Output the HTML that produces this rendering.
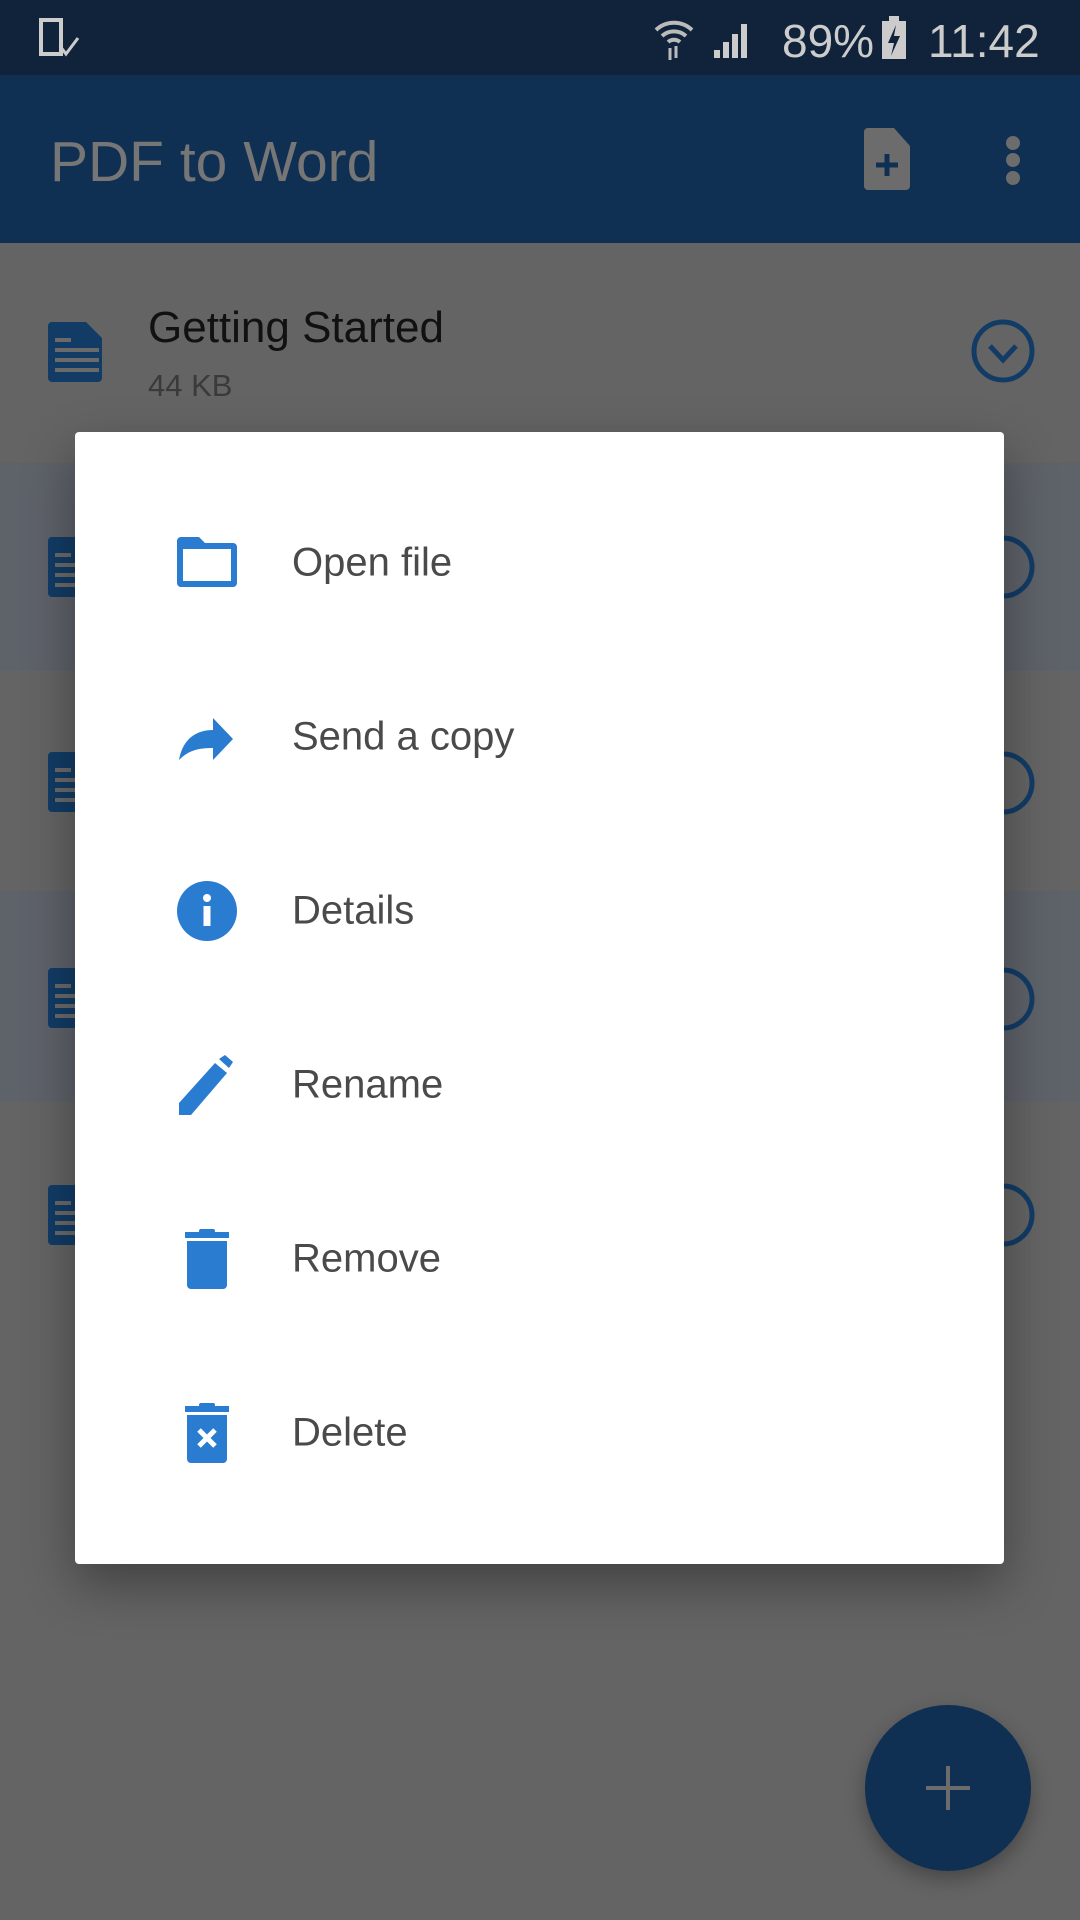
<!DOCTYPE html>
<html><head><meta charset="utf-8"><style>
*{margin:0;padding:0;box-sizing:border-box}
body{width:1080px;height:1920px;position:relative;overflow:hidden;background:#646464;font-family:"Liberation Sans",sans-serif}
.abs{position:absolute}
.status{left:0;top:0;width:1080px;height:75px;background:#11233a}
.bar{left:0;top:75px;width:1080px;height:168px;background:#0f3052}
.band{left:0;width:1080px;background:#5e6269}
.t{position:absolute;white-space:nowrap}
.dlg{left:75px;top:432px;width:929px;height:1132px;background:#fff;border-radius:4px;box-shadow:0 20px 50px rgba(0,0,0,.35)}
.mi{position:absolute;left:292px;font-size:40px;color:#4a4a4a;font-weight:300;transform:translateY(-50%)}
.ic{position:absolute;left:177px}
</style></head><body>
<div class="abs status"></div>
<svg class="abs" style="left:38px;top:18px" width="44" height="42" viewBox="0 0 44 42"><rect x="3" y="2" width="20" height="34" fill="none" stroke="#ccc" stroke-width="4"/><path d="M22 28l6 8 12-16" fill="none" stroke="#ccc" stroke-width="3"/></svg>
<svg class="abs" style="left:652px;top:16px" width="44" height="46" viewBox="0 0 44 46"><path d="M4 14a26 26 0 0 1 36 0M10 20a18 18 0 0 1 24 0M16 26a9 9 0 0 1 12 0" fill="none" stroke="#bbb" stroke-width="4"/><path d="M18 32v12M24 30v12" stroke="#bbb" stroke-width="3"/></svg>
<svg class="abs" style="left:712px;top:18px" width="44" height="42" viewBox="0 0 44 42"><rect x="2" y="32" width="6" height="8" fill="#ccc"/><rect x="11" y="24" width="6" height="16" fill="#ccc"/><rect x="20" y="16" width="6" height="24" fill="#ccc"/><rect x="29" y="6" width="6" height="34" fill="#ccc"/></svg>
<div class="t" style="left:782px;top:14px;font-size:46px;color:#ccc">89%</div>
<svg class="abs" style="left:880px;top:16px" width="28" height="44" viewBox="0 0 28 44"><rect x="9" y="0" width="10" height="6" fill="#ccc"/><rect x="2" y="5" width="24" height="38" fill="#ccc"/><path d="M16 9l-8 18h6l-3 13 9-20h-6z" fill="#11233a"/></svg>
<div class="t" style="left:928px;top:14px;font-size:46px;color:#ccc">11:42</div>
<div class="abs bar"></div>
<div class="t" style="left:50px;top:129px;font-size:57px;color:#767676;font-weight:300">PDF to Word</div>
<svg class="abs" style="left:864px;top:128px" width="48" height="62" viewBox="0 0 48 62"><path d="M4 0h26l16 18v40a4 4 0 0 1-4 4H4a4 4 0 0 1-4-4V4a4 4 0 0 1 4-4z" fill="#6c6c6c"/><path d="M23 26v22M12 37h22" stroke="#0f3052" stroke-width="5"/></svg>
<div class="abs" style="left:1006px;top:136px;width:14px;height:14px;border-radius:50%;background:#6c6c6c"></div>
<div class="abs" style="left:1006px;top:153px;width:14px;height:14px;border-radius:50%;background:#6c6c6c"></div>
<div class="abs" style="left:1006px;top:171px;width:14px;height:14px;border-radius:50%;background:#6c6c6c"></div>
<div class="abs band" style="top:463px;height:208px"></div>
<div class="abs band" style="top:891px;height:211px"></div>
<svg class="abs" style="left:48px;top:322px" width="56" height="60" viewBox="0 0 56 60"><path d="M4 0h34l16 16v40a4 4 0 0 1-4 4H4a4 4 0 0 1-4-4V4a4 4 0 0 1 4-4z" fill="#123c66"/><path d="M7 18h16M7 28h44M7 38h44M7 48h44" stroke="#6a6a6a" stroke-width="4"/></svg>
<svg class="abs" style="left:48px;top:537px" width="56" height="60" viewBox="0 0 56 60"><rect width="56" height="60" rx="4" fill="#123c66"/><path d="M7 18h16M7 28h44M7 38h44M7 48h44" stroke="#6a6a6a" stroke-width="4"/></svg>
<svg class="abs" style="left:48px;top:752px" width="56" height="60" viewBox="0 0 56 60"><rect width="56" height="60" rx="4" fill="#123c66"/><path d="M7 18h16M7 28h44M7 38h44M7 48h44" stroke="#6a6a6a" stroke-width="4"/></svg>
<svg class="abs" style="left:48px;top:968px" width="56" height="60" viewBox="0 0 56 60"><rect width="56" height="60" rx="4" fill="#123c66"/><path d="M7 18h16M7 28h44M7 38h44M7 48h44" stroke="#6a6a6a" stroke-width="4"/></svg>
<svg class="abs" style="left:48px;top:1185px" width="56" height="60" viewBox="0 0 56 60"><rect width="56" height="60" rx="4" fill="#123c66"/><path d="M7 18h16M7 28h44M7 38h44M7 48h44" stroke="#6a6a6a" stroke-width="4"/></svg>
<div class="t" style="left:148px;top:303px;font-size:44px;color:#111;font-weight:300">Getting Started</div>
<div class="t" style="left:148px;top:368px;font-size:31px;color:#3a3a3a">44 KB</div>
<svg class="abs" style="left:970px;top:318px" width="66" height="66" viewBox="0 0 66 66"><circle cx="33" cy="33" r="29" fill="none" stroke="#123c66" stroke-width="5"/><path d="M20 28l13 14 13-14" fill="none" stroke="#123c66" stroke-width="5"/></svg>
<svg class="abs" style="left:970px;top:534px" width="66" height="66" viewBox="0 0 66 66"><circle cx="33" cy="33" r="29" fill="none" stroke="#123c66" stroke-width="5"/></svg>
<svg class="abs" style="left:970px;top:750px" width="66" height="66" viewBox="0 0 66 66"><circle cx="33" cy="33" r="29" fill="none" stroke="#123c66" stroke-width="5"/></svg>
<svg class="abs" style="left:970px;top:966px" width="66" height="66" viewBox="0 0 66 66"><circle cx="33" cy="33" r="29" fill="none" stroke="#123c66" stroke-width="5"/></svg>
<svg class="abs" style="left:970px;top:1182px" width="66" height="66" viewBox="0 0 66 66"><circle cx="33" cy="33" r="29" fill="none" stroke="#123c66" stroke-width="5"/></svg>
<div class="abs" style="left:865px;top:1705px;width:166px;height:166px;border-radius:50%;background:#0f3052;box-shadow:0 8px 20px rgba(0,0,0,.3)"></div>
<div class="abs" style="left:926px;top:1786px;width:44px;height:4px;background:#6c6c6c"></div>
<div class="abs" style="left:946px;top:1766px;width:4px;height:44px;background:#6c6c6c"></div>
<div class="abs dlg"></div>
<svg class="ic" style="top:537px" width="60" height="50" viewBox="0 0 60 50"><path d="M4 0h18l6 6h28a4 4 0 0 1 4 4v36a4 4 0 0 1-4 4H4a4 4 0 0 1-4-4V4a4 4 0 0 1 4-4z" fill="#2a7cd0"/><rect x="6" y="12" width="48" height="32" fill="#fff"/></svg>
<svg class="ic" style="top:712px" width="60" height="50" viewBox="0 0 60 50"><path d="M2 48C6 26 20 18 36 18V6l20 21-20 21V36C22 36 12 38 2 48z" fill="#2a7cd0"/></svg>
<svg class="ic" style="top:881px" width="60" height="60" viewBox="0 0 60 60"><circle cx="30" cy="30" r="30" fill="#2a7cd0"/><rect x="26.5" y="25" width="7" height="20" fill="#fff"/><circle cx="30" cy="17" r="4" fill="#fff"/></svg>
<svg class="ic" style="top:1055px" width="60" height="60" viewBox="0 0 60 60"><path d="M2 60V48L38 8l12 10-36 42z" fill="#2a7cd0"/><path d="M42 4l6-4 8 7-4 6z" fill="#2a7cd0"/></svg>
<svg class="ic" style="top:1229px" width="60" height="60" viewBox="0 0 60 60"><rect x="8" y="3" width="44" height="6" fill="#2a7cd0"/><rect x="22" y="0" width="16" height="4" rx="2" fill="#2a7cd0"/><path d="M10 12h40v44a4 4 0 0 1-4 4H14a4 4 0 0 1-4-4z" fill="#2a7cd0"/></svg>
<svg class="ic" style="top:1403px" width="60" height="60" viewBox="0 0 60 60"><rect x="8" y="3" width="44" height="6" fill="#2a7cd0"/><rect x="22" y="0" width="16" height="4" rx="2" fill="#2a7cd0"/><path d="M10 12h40v44a4 4 0 0 1-4 4H14a4 4 0 0 1-4-4z" fill="#2a7cd0"/><path d="M22 27l16 16M38 27L22 43" stroke="#fff" stroke-width="5"/></svg>
<div class="mi" style="top:563px">Open file</div>
<div class="mi" style="top:737px">Send a copy</div>
<div class="mi" style="top:911px">Details</div>
<div class="mi" style="top:1085px">Rename</div>
<div class="mi" style="top:1259px">Remove</div>
<div class="mi" style="top:1433px">Delete</div>
</body></html>
